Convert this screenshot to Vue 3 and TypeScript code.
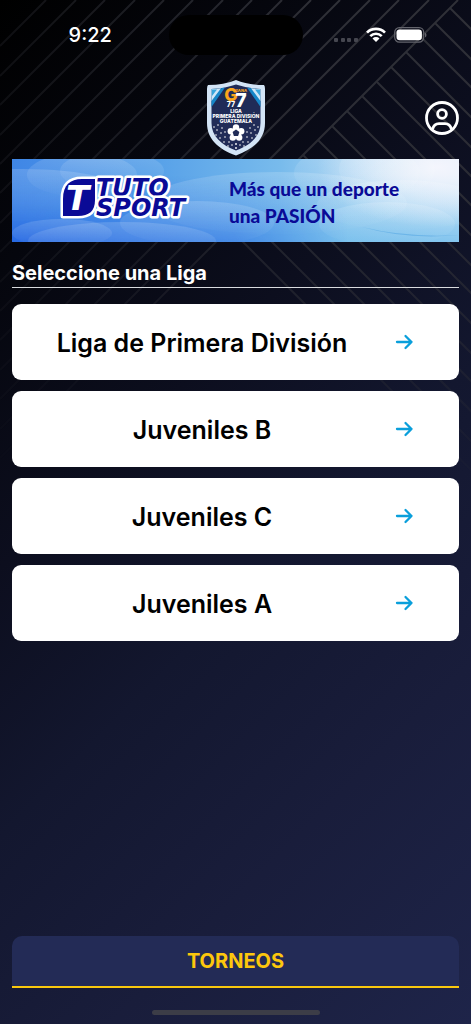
<script setup lang="ts">
interface League {
  id: number
  name: string
}

const leagues: League[] = [
  { id: 1, name: 'Liga de Primera División' },
  { id: 2, name: 'Juveniles B' },
  { id: 3, name: 'Juveniles C' },
  { id: 4, name: 'Juveniles A' },
]

// Diagonal hatch: strokes parallel to the spine, and branches leaving it to the right.
const slants: number[] = Array.from({ length: 15 }, (_, i) => Math.round(458 - i * 29.4))
const branches = Array.from({ length: 16 }, (_, i) => ({
  x: Math.round(450 - i * 14.7),
  y: Math.round(8 + i * 14.7),
}))

// Small stars on both sides of the ball in the crest.
const stars: number[][] = [
  [8, 47], [12, 45], [11, 50], [16, 48], [10, 55], [15, 53], [19, 52], [14, 58],
  [19, 57], [18, 62], [23, 62], [22, 66], [26, 65], [30, 68], [30, 64],
]
</script>

<template>
  <div class="screen">
    <svg class="pattern" viewBox="0 0 471 471" aria-hidden="true">
      <defs>
        <linearGradient id="fade" x1="0" y1="0" x2="0" y2="1">
          <stop offset="0" stop-color="#fff" />
          <stop offset="0.4" stop-color="#fff" stop-opacity="0.85" />
          <stop offset="1" stop-color="#fff" stop-opacity="0.1" />
        </linearGradient>
        <linearGradient id="side" x1="0" y1="0" x2="1" y2="0">
          <stop offset="0" stop-color="#000" stop-opacity="0.7" />
          <stop offset="0.7" stop-color="#000" stop-opacity="0" />
        </linearGradient>
        <mask id="fadeMask" maskUnits="userSpaceOnUse" x="0" y="0" width="471" height="471">
          <rect width="471" height="471" fill="url(#fade)" />
          <rect width="471" height="471" fill="url(#side)" />
        </mask>
      </defs>
      <g mask="url(#fadeMask)" stroke="#303138" stroke-width="2">
        <line v-for="s in slants" :key="s" :x1="s" y1="0" x2="0" :y2="s" />
        <line
          v-for="b in branches"
          :key="b.y"
          :x1="b.x"
          :y1="b.y"
          :x2="b.x + 460"
          :y2="b.y + 460"
        />
      </g>
    </svg>

    <div class="status">
      <span class="clock">9:22</span>
      <span class="island"></span>
      <div class="indicators">
        <svg class="signal" width="24" height="20" viewBox="0 0 24 20" aria-hidden="true">
          <g fill="#45464f">
            <rect x="0" y="13" width="4" height="4" rx="1" />
            <rect x="7" y="13" width="4" height="4" rx="1" />
            <rect x="13" y="13" width="4" height="4" rx="1" />
            <rect x="20" y="13" width="4" height="4" rx="1" />
          </g>
        </svg>
        <svg width="20" height="16" viewBox="0 0 20 16" aria-label="Wi-Fi" role="img">
          <g fill="none" stroke="#fff" stroke-width="2.7">
            <path d="M1 5.600A12.800 12.800 0 0 1 19 5.600" />
            <path d="M4.300 9.100A8.100 8.100 0 0 1 15.700 9.100" />
          </g>
          <path d="M6.500 11.500A5 5 0 0 1 13.500 11.500L10 15Z" fill="#fff" />
        </svg>
        <svg width="33" height="16" viewBox="0 0 33 16" aria-label="Batería" role="img">
          <rect x="0.700" y="0.700" width="29" height="14.400" rx="4.600" fill="none" stroke="#63646c" stroke-width="1.200" />
          <rect x="2.500" y="2.500" width="25.400" height="10.800" rx="3.200" fill="#fff" />
          <path d="M31 5.500Q32.500 6.200 32.500 8T31 10.400Z" fill="#63646c" />
        </svg>
      </div>
    </div>

    <header class="header">
      <svg class="crest" width="60" height="76" viewBox="0 0 60 76" role="img" aria-label="Liga Primera División Guatemala">
        <path d="M30 0Q42 5 58 5Q59 6 59 9V43C59 59 48 69 30 75.500C12 69 1 59 1 43V9Q1 6 2 5Q18 5 30 0Z" fill="#d3e4f6" />
        <path d="M30 4.500Q42 8.500 54.500 9V43C54.500 56 45 65 30 70.500C15 65 5.500 56 5.500 43V9Q18 8.500 30 4.500Z" fill="#202b57" />
        <path d="M5.500 9Q13 9 19 7.500L5.500 27Z" fill="#1686c8" />
        <path d="M54.500 9Q47 9 41 7.500L54.500 27Z" fill="#1686c8" />
        <path d="M5.500 9Q11 9 15 8.300L5.500 21Z" fill="#cfe6f7" />
        <path d="M54.500 9Q49 9 45 8.300L54.500 21Z" fill="#cfe6f7" />
        <path d="M6 9.500H11L6 16ZM54 9.500H49L54 16Z" fill="#38a6dc" />
        <g class="crest-text" text-anchor="middle">
          <text class="crest-g" x="25" y="21">G</text>
          <text class="crest-seven" x="35" y="27">7</text>
          <text class="crest-gana" x="35" y="12">GANA</text>
          <text class="crest-sevens" x="25" y="27">77</text>
          <text class="crest-name" x="30" y="33">LIGA</text>
          <text class="crest-name" x="30" y="38">PRIMERA DIVISIÓN</text>
          <text class="crest-name" x="30" y="43">GUATEMALA</text>
        </g>
        <g fill="#fff">
          <g v-for="(s, i) in stars" :key="i">
            <circle :cx="s[0]" :cy="s[1]" r="0.800" />
            <circle :cx="60 - s[0]" :cy="s[1]" r="0.800" />
          </g>
          <circle cx="30" cy="47.500" r="3.200" />
          <circle cx="24.800" cy="51.300" r="3.200" />
          <circle cx="35.200" cy="51.300" r="3.200" />
          <circle cx="26.800" cy="57.600" r="3.200" />
          <circle cx="33.200" cy="57.600" r="3.200" />
          <circle cx="30" cy="53" r="5.500" />
        </g>
        <path d="M30 49.600L33.400 52.100L32.100 56H27.900L26.600 52.100Z" fill="#202b57" />
      </svg>
      <button class="profile" type="button" aria-label="Perfil">
        <svg width="34" height="34" viewBox="0 0 34 34" fill="none" stroke="#fff" stroke-width="2.800" aria-hidden="true">
          <circle cx="17" cy="17" r="15.500" />
          <circle cx="17" cy="13" r="4.400" />
          <path d="M7.500 28.500C8.300 25 10.500 22.700 14 22.700H20C23.500 22.700 25.700 25 26.500 28.500" />
        </svg>
      </button>
    </header>

    <main class="content">
      <a class="banner" href="#tutosport" aria-label="Tuto Sport">
        <svg viewBox="0 0 447 83">
          <defs>
            <linearGradient id="sky" x1="0" y1="0" x2="1" y2="0">
              <stop offset="0" stop-color="#3f86e6" />
              <stop offset="0.3" stop-color="#559fe8" />
              <stop offset="0.6" stop-color="#78bbec" />
              <stop offset="0.82" stop-color="#b5daf4" />
              <stop offset="1" stop-color="#d8ebf8" />
            </linearGradient>
            <linearGradient id="glow" x1="0" y1="0" x2="0" y2="1">
              <stop offset="0" stop-color="#fff" stop-opacity="0.16" />
              <stop offset="1" stop-color="#fff" stop-opacity="0.01" />
            </linearGradient>
            <linearGradient id="deep" x1="0" y1="0.200" x2="0" y2="1">
              <stop offset="0" stop-color="#1250e0" stop-opacity="0" />
              <stop offset="1" stop-color="#1250e0" stop-opacity="0.75" />
            </linearGradient>
            <linearGradient id="aqua" x1="0" y1="0.200" x2="0" y2="1">
              <stop offset="0" stop-color="#6fbcec" stop-opacity="0" />
              <stop offset="1" stop-color="#6fbcec" stop-opacity="0.8" />
            </linearGradient>
            <linearGradient id="shade" x1="0" y1="0" x2="1" y2="0">
              <stop offset="0" stop-color="#fff" />
              <stop offset="0.5" stop-color="#999" />
              <stop offset="0.75" stop-color="#000" />
            </linearGradient>
            <radialGradient id="sun">
              <stop offset="0" stop-color="#f6f6fd" stop-opacity="0.95" />
              <stop offset="1" stop-color="#f6f6fd" stop-opacity="0" />
            </radialGradient>
            <mask id="shadeMask" maskUnits="userSpaceOnUse" x="0" y="0" width="447" height="83">
              <rect width="447" height="83" fill="url(#shade)" />
            </mask>
          </defs>
          <rect width="447" height="83" fill="url(#sky)" />
          <rect width="447" height="83" fill="url(#aqua)" />
          <rect width="447" height="83" fill="url(#deep)" mask="url(#shadeMask)" />
          <ellipse cx="425" cy="8" rx="120" ry="60" fill="url(#sun)" />
          <g fill="url(#glow)">
            <ellipse cx="70" cy="16" rx="55" ry="22" />
            <ellipse cx="100" cy="12" rx="52" ry="20" />
            <ellipse cx="10" cy="36" rx="110" ry="26" />
            <ellipse cx="265" cy="44" rx="130" ry="31" />
            <ellipse cx="345" cy="14" rx="63" ry="28" />
            <ellipse cx="375" cy="10" rx="48" ry="28" />
            <ellipse cx="390" cy="46" rx="85" ry="25" />
            <ellipse cx="185" cy="64" rx="77" ry="22" />
            <ellipse cx="50" cy="74" rx="50" ry="14" />
            <ellipse cx="110" cy="82" rx="94" ry="19" />
            <ellipse cx="375" cy="65" rx="68" ry="22" />
          </g>
          <path d="M350 68Q395 81 447 76Q395 79 350 68Z" fill="#4ba2e2" opacity="0.5" />

          <g class="wordmark">
            <path
              d="M51 57V40C51 26 58 20 70 20H83V41C83 52 77 57 66 57Z"
              fill="#fff"
              stroke="#fff"
              stroke-width="5"
              stroke-linejoin="round"
            />
            <text class="wordmark-line" x="84" y="37">TUTO</text>
            <text class="wordmark-line" x="84" y="57">SPORT</text>
            <path d="M51 57V40C51 26 58 20 70 20H83V41C83 52 77 57 66 57Z" fill="#0a0a96" />
            <text class="wordmark-initial" x="54" y="51">T</text>
          </g>

          <g class="slogan">
            <text x="217" y="37">Más que un deporte</text>
            <text x="217" y="64">una PASIÓN</text>
          </g>
        </svg>
      </a>

      <h1 class="title">Seleccione una Liga</h1>

      <nav class="leagues" aria-label="Ligas">
        <button v-for="league in leagues" :key="league.id" class="league" type="button">
          <span class="league-name">{{ league.name }}</span>
          <svg width="24" height="24" viewBox="0 0 24 24" aria-hidden="true">
            <path
              d="M5 12H19.500M13.500 6L19.500 12L13.500 18"
              fill="none"
              stroke="#0a9fdb"
              stroke-width="2.300"
              stroke-linecap="round"
              stroke-linejoin="round"
            />
          </svg>
        </button>
      </nav>
    </main>

    <footer class="footer">
      <button class="tab" type="button">TORNEOS</button>
      <span class="home-bar"></span>
    </footer>
  </div>
</template>

<style>
body {
  margin: 0;
  background: #14172f;
}
</style>

<style scoped>
.screen {
  position: relative;
  display: flex;
  flex-direction: column;
  min-height: 100vh;
  overflow: hidden;
  box-sizing: border-box;
  background: linear-gradient(135deg, #000 0%, #05060d 18%, #0c0e1e 38%, #13172f 56%, #191d3b 76%, #1e2449 100%);
  color: #fff;
  font-family: Inter, "Liberation Sans", sans-serif;
}

.pattern {
  position: absolute;
  top: 0;
  left: 0;
  width: 100%;
}

.status,
.header,
.content,
.footer {
  position: relative;
}

.status {
  display: grid;
  grid-template-columns: 1fr 134px 1fr;
  align-items: center;
  height: 70px;
}

.clock {
  padding-left: 12px;
  text-align: center;
  font-size: 20px;
  font-weight: 500;
  line-height: 24px;
}

.island {
  height: 40px;
  border-radius: 20px;
  background: #000;
}

.indicators {
  display: flex;
  align-items: center;
  justify-content: center;
  gap: 8px;
  padding-right: 12px;
}

.header {
  display: grid;
  grid-template-columns: 1fr auto 1fr;
  align-items: center;
  padding: 10px 12px 3px;
}

.crest {
  grid-column: 2;
}

.crest-text {
  fill: #fff;
  font-family: Inter, sans-serif;
  font-weight: 800;
}

.crest-name {
  font-size: 5px;
}

.crest-g {
  fill: #f9a51b;
  font-size: 18px;
}

.crest-seven {
  font-size: 19px;
}

.crest-gana {
  fill: #f9a51b;
  font-size: 4px;
}

.crest-sevens {
  font-size: 7px;
}

.profile {
  display: flex;
  justify-self: end;
  padding: 0;
  border: 0;
  background: none;
}

.content {
  flex: 1;
  padding: 0 12px;
}

.banner,
.banner svg {
  display: block;
  width: 100%;
}

.wordmark-line {
  fill: #0a0a96;
  stroke: #fff;
  stroke-width: 5px;
  stroke-linejoin: round;
  paint-order: stroke;
  font: italic bold 24px "DejaVu Sans", sans-serif;
}

.wordmark-initial {
  fill: #fff;
  font: italic bold 34px "DejaVu Sans", sans-serif;
}

.slogan {
  fill: #0a0a96;
  font: 900 19px Lato, "Open Sans", sans-serif;
}

.title {
  margin: 19px 0 16px;
  padding-bottom: 2px;
  border-bottom: 1px solid #d9dbdf;
  font-size: 20px;
  font-weight: 700;
  line-height: 24px;
}

.leagues {
  display: flex;
  flex-direction: column;
  gap: 11px;
}

.league {
  display: flex;
  align-items: center;
  min-height: 76px;
  padding: 0 43px 0 0;
  border: 0;
  border-radius: 9px;
  background: #fff;
  color: #000;
  font: 600 25px/30px Inter, "Liberation Sans", sans-serif;
}

.league-name {
  flex: 1;
  padding-top: 2px;
  text-align: center;
}

.footer {
  display: flex;
  flex-direction: column;
  align-items: center;
  gap: 22px;
  padding: 24px 12px 9px;
}

.tab {
  width: 100%;
  height: 52px;
  border: 0;
  border-bottom: 2px solid #f9c80e;
  border-radius: 10px 10px 0 0;
  background: #232b56;
  color: #fdc70c;
  font: 700 20px/24px Inter, "Liberation Sans", sans-serif;
}

.home-bar {
  width: 168px;
  height: 5px;
  border-radius: 3px;
  background: #3c3d47;
}
</style>
